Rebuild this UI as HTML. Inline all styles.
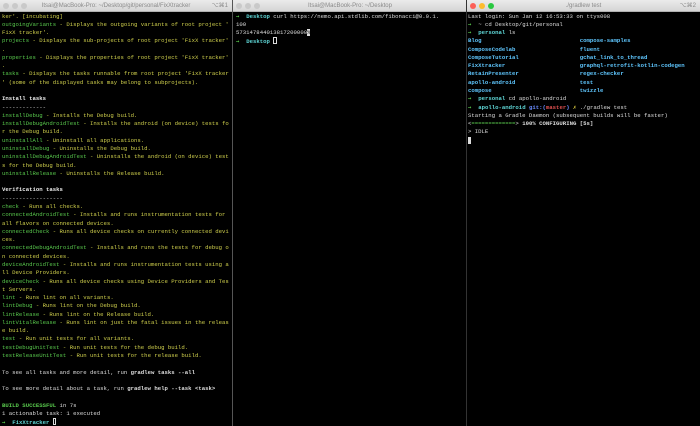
<!DOCTYPE html>
<html><head><meta charset="utf-8"><style>
*{margin:0;padding:0;box-sizing:border-box}
body{width:700px;height:426px;background:#000;position:relative;overflow:hidden;font-family:"Liberation Mono",monospace}
.win{position:absolute;top:0;height:426px;background:#000;overflow:hidden}
.tb{position:absolute;top:0;left:0;right:0;height:12px;background:linear-gradient(#ebebeb,#d5d5d5);border-bottom:1px solid #b0b0b0;font-family:"Liberation Sans",sans-serif;font-size:6px;color:#8a8a8a;text-align:center;line-height:12px;white-space:nowrap}
.tb .k{position:absolute;right:4px;top:0}
.d{position:absolute;top:3px;width:6px;height:6px;border-radius:50%;background:#c9c9c9}
pre{position:absolute;top:12.5px;left:2px;font-family:"Liberation Mono",monospace;font-size:5.65px;line-height:8.28px;color:#cfcf4c;white-space:pre}
.g{color:#58c84c}.w{color:#eee;font-weight:bold}.t{color:#ddd}.c{color:#5fd7d7;font-weight:bold}.b{color:#5fc7ff;font-weight:bold}.r{color:#e05050;font-weight:bold}.y{color:#e0d040}
.a{color:#58c84c;font-family:"DejaVu Sans Mono",monospace;font-weight:bold}
.cur{display:inline-block;width:3.4px;height:7px;border:1px solid #ddd;vertical-align:-1px}
</style></head><body>
<div class="win" style="left:0;width:232px">
<div class="tb"><span class="d" style="left:3px"></span><span class="d" style="left:12px"></span><span class="d" style="left:21px"></span>Itsai@MacBook-Pro: ~/Desktop/git/personal/FixXtracker<span class="k">⌥⌘1</span></div>
<pre>ker'. [incubating]
<span class="g">outgoingVariants</span> - Displays the outgoing variants of root project '
FixX tracker'.
<span class="g">projects</span> - Displays the sub-projects of root project 'FixX tracker'
.
<span class="g">properties</span> - Displays the properties of root project 'FixX tracker'
.
<span class="g">tasks</span> - Displays the tasks runnable from root project 'FixX tracker
' (some of the displayed tasks may belong to subprojects).

<span class="w">Install tasks</span>
<span class="t">-------------</span>
<span class="g">installDebug</span> - Installs the Debug build.
<span class="g">installDebugAndroidTest</span> - Installs the android (on device) tests fo
r the Debug build.
<span class="g">uninstallAll</span> - Uninstall all applications.
<span class="g">uninstallDebug</span> - Uninstalls the Debug build.
<span class="g">uninstallDebugAndroidTest</span> - Uninstalls the android (on device) test
s for the Debug build.
<span class="g">uninstallRelease</span> - Uninstalls the Release build.

<span class="w">Verification tasks</span>
<span class="t">------------------</span>
<span class="g">check</span> - Runs all checks.
<span class="g">connectedAndroidTest</span> - Installs and runs instrumentation tests for
all flavors on connected devices.
<span class="g">connectedCheck</span> - Runs all device checks on currently connected devi
ces.
<span class="g">connectedDebugAndroidTest</span> - Installs and runs the tests for debug o
n connected devices.
<span class="g">deviceAndroidTest</span> - Installs and runs instrumentation tests using a
ll Device Providers.
<span class="g">deviceCheck</span> - Runs all device checks using Device Providers and Tes
t Servers.
<span class="g">lint</span> - Runs lint on all variants.
<span class="g">lintDebug</span> - Runs lint on the Debug build.
<span class="g">lintRelease</span> - Runs lint on the Release build.
<span class="g">lintVitalRelease</span> - Runs lint on just the fatal issues in the releas
e build.
<span class="g">test</span> - Run unit tests for all variants.
<span class="g">testDebugUnitTest</span> - Run unit tests for the debug build.
<span class="g">testReleaseUnitTest</span> - Run unit tests for the release build.

<span class="t">To see all tasks and more detail, run <b>gradlew tasks --all</b></span>

<span class="t">To see more detail about a task, run <b>gradlew help --task &lt;task&gt;</b></span>

<span class="g" style="font-weight:bold">BUILD SUCCESSFUL</span><span class="t"> in 7s</span>
<span class="t">1 actionable task: 1 executed</span>
<span class="a">→</span>  <span class="c">FixXtracker</span> <span class="cur"></span></pre>
</div>
<div style="position:absolute;left:232px;top:0;width:1px;height:426px;background:#555"></div>
<div class="win" style="left:233px;width:234px">
<div class="tb"><span class="d" style="left:3px"></span><span class="d" style="left:12px"></span><span class="d" style="left:21px"></span>Itsai@MacBook-Pro: ~/Desktop</div>
<pre style="left:3px"><span class="a">→</span>  <span class="c">Desktop</span> <span class="t">curl https://nemo.api.stdlib.com/fibonacci@0.0.1.</span>
<span class="t">100</span>
<span class="t">573147844013817200000</span><span style="background:#ddd;color:#000">%</span>
<span class="a">→</span>  <span class="c">Desktop</span> <span class="cur"></span></pre>
</div>
<div style="position:absolute;left:466px;top:0;width:1px;height:426px;background:#333"></div>
<div class="win" style="left:467px;width:233px">
<div class="tb"><span class="d" style="left:3px;background:#fc5f57"></span><span class="d" style="left:12px;background:#fdbc2e"></span><span class="d" style="left:21px;background:#29c840"></span>./gradlew test<span class="k">⌥⌘2</span></div>
<pre style="left:1px"><span class="t">Last login: Sun Jan 12 16:53:33 on ttys008</span>
<span class="a">→</span>  <span class="t">~ cd Desktop/git/personal</span>
<span class="a">→</span>  <span class="c">personal</span> <span class="t">ls</span>
<span class="b">Blog                             compose-samples</span>
<span class="b">ComposeCodelab                   fluent</span>
<span class="b">ComposeTutorial                  gchat_link_to_thread</span>
<span class="b">FixXtracker                      graphql-retrofit-kotlin-codegen</span>
<span class="b">RetainPresenter                  regex-checker</span>
<span class="b">apollo-android                   test</span>
<span class="b">compose                          twizzle</span>
<span class="a">→</span>  <span class="c">personal</span> <span class="t">cd apollo-android</span>
<span class="a">→</span>  <span class="c">apollo-android</span> <span class="b" style="color:#6a8cff">git:(</span><span class="r">master</span><span class="b" style="color:#6a8cff">)</span> <span class="y">✗</span> <span class="t">./gradlew test</span>
<span class="t">Starting a Gradle Daemon (subsequent builds will be faster)</span>
<span class="t">&lt;<span class="g">=============</span>&gt; <b>100% CONFIGURING [5s]</b></span>
<span class="t">&gt; IDLE</span>
<span style="display:inline-block;width:3.4px;height:7px;background:#ddd;vertical-align:-1px"></span></pre>
</div>
</body></html>
